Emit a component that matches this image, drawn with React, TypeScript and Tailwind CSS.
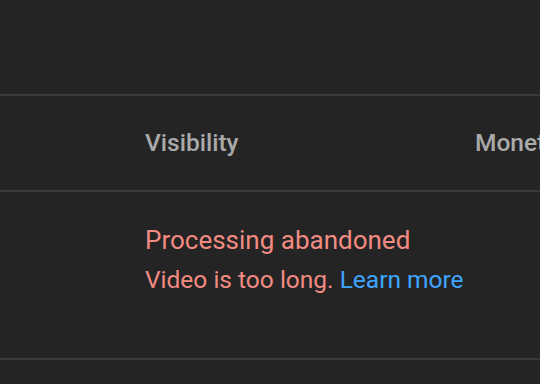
export default function App() {
  return (
    <div
      className="w-[540px] h-[384px] overflow-hidden bg-[#242424]"
      style={{ fontFamily: "Roboto, 'Liberation Sans', sans-serif" }}
    >
      {/* Top area */}
      <div className="h-[96px] border-b-2 border-[#3a3a3a]" />

      {/* Header row */}
      <div className="flex h-[96px] items-center border-b-2 border-[#3a3a3a] pl-[145px] whitespace-nowrap">
        <div className="w-[330px] shrink-0 text-[24.5px] font-medium text-[#aaaaaa]">Visibility</div>
        <div className="shrink-0 text-[24.5px] font-medium text-[#aaaaaa]">Monetization</div>
      </div>

      {/* Data row */}
      <div className="h-[168px] border-b-2 border-[#3a3a3a] pl-[145px] pt-[30px] whitespace-nowrap">
        <div className="text-[26px] leading-[36px] text-[#f28b82]">Processing abandoned</div>
        <div className="mt-[4px] text-[24.5px] leading-[36px] text-[#f28b82]">
          Video is too long. <span className="text-[#3ea6ff]">Learn more</span>
        </div>
      </div>
    </div>
  );
}
